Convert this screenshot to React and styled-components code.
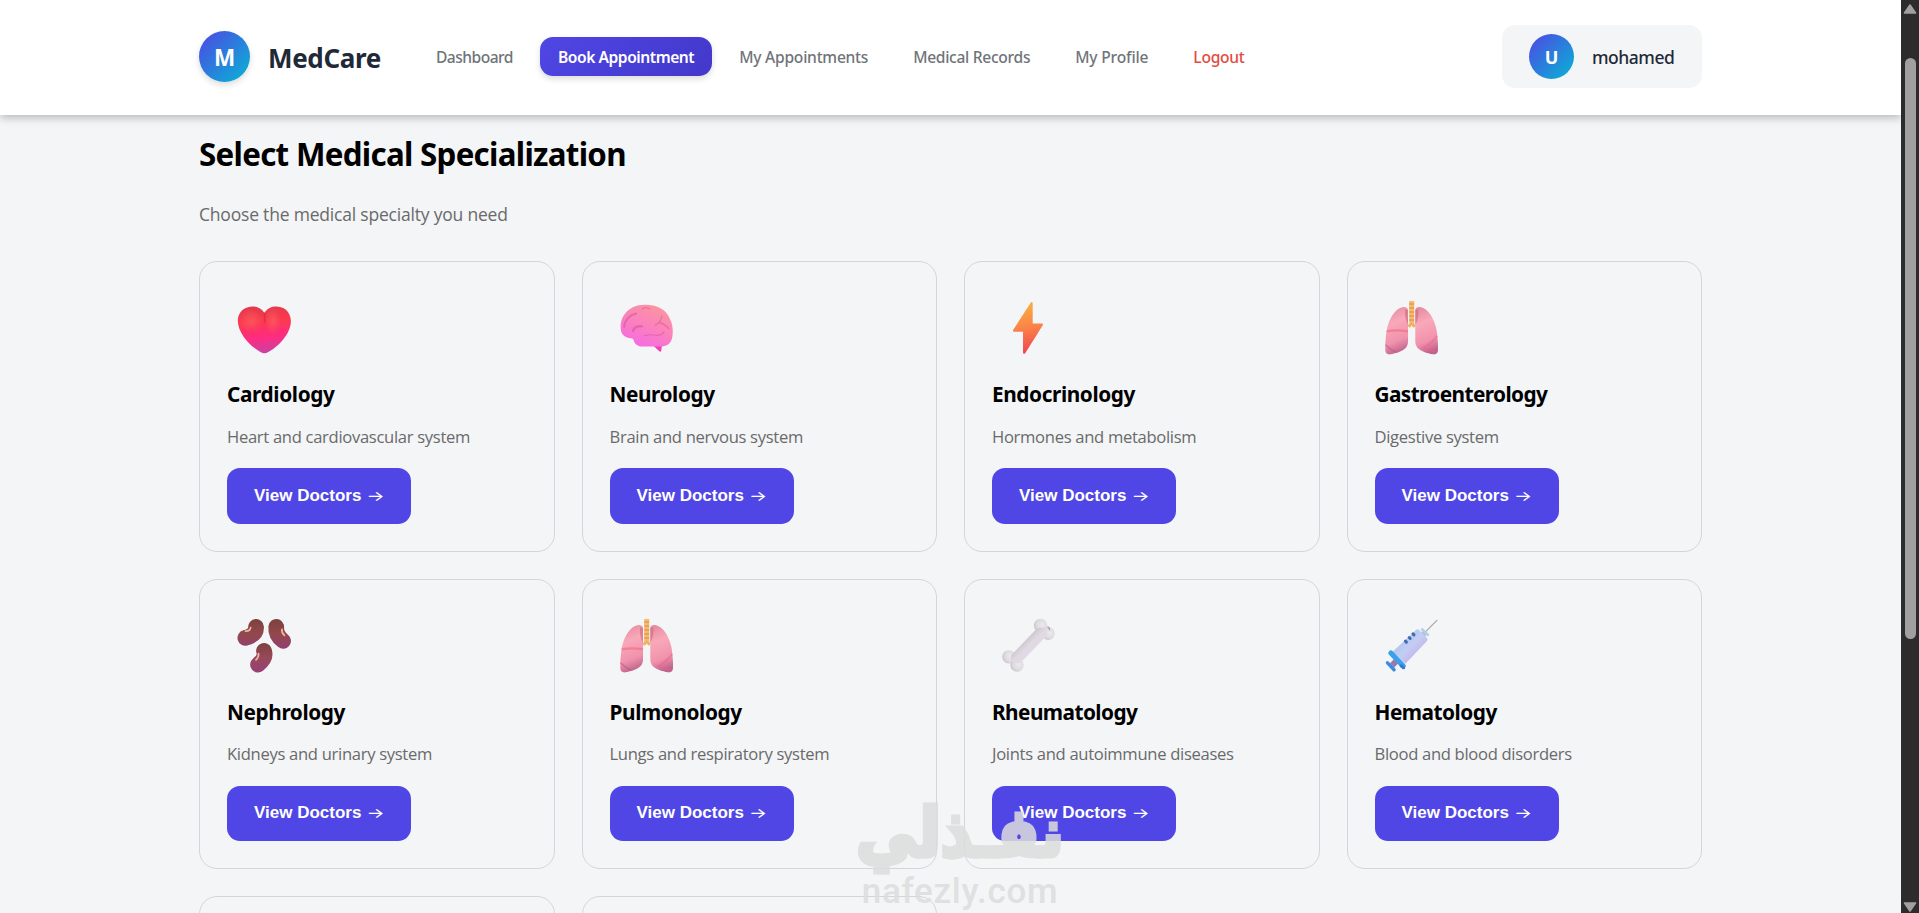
import styled, {createGlobalStyle} from 'styled-components';


function HeartIcon() {
  return (
    <svg width="74" height="76" viewBox="0 0 74 76">
      <defs>
        <linearGradient id="heartFill" x1="0" y1="0" x2="0.1" y2="1">
          <stop offset="0" stopColor="#e0394c" />
          <stop offset="0.35" stopColor="#fb3a4d" />
          <stop offset="0.7" stopColor="#ff2b80" />
          <stop offset="1" stopColor="#cf3fa0" />
        </linearGradient>
        <radialGradient id="heartLight">
          <stop offset="0" stopColor="#ff6464" stopOpacity="0.6" />
          <stop offset="1" stopColor="#ff6464" stopOpacity="0" />
        </radialGradient>
      </defs>
      <path d="M37.4 24C33 17.5 26 16.8 21 18.2C14 20 10.7 26 10.7 32C11 45 24 58 33.5 63.2Q37.4 65.6 41.3 63.2C51 58 64 45 64 32C64 26 60 19.5 54 18.2C48 16.8 41.5 17.5 37.4 24Z" fill="url(#heartFill)" />
      <ellipse cx="24" cy="32" rx="12" ry="12" fill="url(#heartLight)" />
      <ellipse cx="46" cy="32" rx="8" ry="14" fill="url(#heartLight)" />
      <path d="M37.4 24L37.8 33" stroke="#c91f3c" strokeOpacity="0.5" strokeWidth="1.5" strokeLinecap="round" />
    </svg>
  );
}

function BrainIcon() {
  return (
    <svg width="74" height="76" viewBox="0 0 74 76" fill="none">
      <defs>
        <linearGradient id="brainFill" x1="0.75" y1="0.1" x2="0.3" y2="1">
          <stop offset="0" stopColor="#fb93a2" />
          <stop offset="0.5" stopColor="#fb7fc0" />
          <stop offset="1" stopColor="#f56be4" />
        </linearGradient>
      </defs>
      <path d="M43.5 57L49 62.2Q51 64 51.4 61.5L52 56Z" fill="#f43fb8" />
      <path d="M10.6 39C10 26 20 16 34.5 15.8C48 15.6 57 21 60.5 31C63 36 63.6 44 62 50C60 56 56 58 50 57.8H32C27 57.6 24.5 55 23.2 50.2C20 49 17 49.5 14.5 47.5C11.5 45.5 10.7 42.5 10.6 39Z" fill="url(#brainFill)" />
      <g stroke="#d65a92" strokeWidth="1.1" strokeLinecap="round" opacity="0.6">
        <path d="M14 38C15 30 20 26 26 24.5" strokeWidth="2" />
        <path d="M23 42C24 38 28 37 32 37.5" strokeWidth="2.4" />
        <path d="M32 20Q36 17.5 40 20" />
        <path d="M52 27Q51 34 45 36.5M50 34Q55 35 59 40" />
        <path d="M34 47Q41 45 46 46.5Q52 47 54 43" />
      </g>
    </svg>
  );
}

function BoltIcon() {
  return (
    <svg width="74" height="76" viewBox="0 0 74 76">
      <defs>
        <linearGradient id="boltFill" x1="0.4" y1="0" x2="0.5" y2="1">
          <stop offset="0" stopColor="#fbb040" />
          <stop offset="0.5" stopColor="#fb8248" />
          <stop offset="1" stopColor="#ee4350" />
        </linearGradient>
      </defs>
      <path d="M39 13.2Q40.7 12.6 40.7 14.6V34.7H50Q51.6 34.9 50.8 36.3L33.2 64.4Q31.2 66 31 63.7V43H22Q20.4 42.6 21.2 41Z" fill="url(#boltFill)" />
    </svg>
  );
}

function LungsIcon() {
  return (
    <svg width="74" height="76" viewBox="0 0 74 76" fill="none">
      <defs>
        <linearGradient id="lungFill" x1="0.2" y1="0" x2="0.4" y2="1">
          <stop offset="0" stopColor="#e58a9e" />
          <stop offset="0.35" stopColor="#f9a8ba" />
          <stop offset="0.75" stopColor="#f092ac" />
          <stop offset="1" stopColor="#c0648e" />
        </linearGradient>
      </defs>
      <path d="M33 21Q32.5 17.6 28 18C19.5 19.5 13.5 31 11.7 41C10.6 48 10 55 10.2 61.5Q10.4 66 15 65.6C21 64.8 29 62 31.6 58Q33 56 33 53Z" fill="url(#lungFill)" />
      <path d="M40.3 21Q40.8 17.6 45.3 18C53.8 19.5 59.8 31 61.6 41C62.7 48 63.3 55 63.1 61.5Q62.9 66 58.3 65.6C52.3 64.8 44.3 62 41.7 58Q40.3 56 40.3 53Z" fill="url(#lungFill)" />
      <path d="M30 20Q29 29 33 36V21ZM43.3 20Q44.3 29 40.3 36V21Z" fill="#c96a78" opacity="0.6" />
      <path d="M11.6 42.5Q22 40.5 33 42.5" stroke="#f4677f" strokeWidth="2.4" opacity="0.6" />
      <path d="M10.4 56Q14 60 21 63.6" stroke="#b5507f" strokeWidth="1.5" opacity="0.5" />
      <path d="M62.4 47Q56 55 49 59L60 63" stroke="#f4607f" strokeWidth="1.8" opacity="0.5" />
      <path d="M36.7 12V34L33.6 38M36.7 34L39.8 38" stroke="#f3b064" strokeWidth="3.2" />
      <path d="M36.7 12V34" stroke="#f7b96c" strokeWidth="5" />
      <path d="M36.7 14.5V34" stroke="#d98a45" strokeWidth="5" strokeDasharray="1 3" />
    </svg>
  );
}

function BeansIcon() {
  return (
    <svg width="74" height="76" viewBox="0 0 74 76" fill="none">
      <defs>
        <linearGradient id="beanTop" gradientUnits="userSpaceOnUse" x1="0" y1="12" x2="0" y2="42">
          <stop offset="0" stopColor="#7d403f" />
          <stop offset="0.5" stopColor="#93484c" />
          <stop offset="1" stopColor="#924072" />
        </linearGradient>
        <linearGradient id="beanLow" gradientUnits="userSpaceOnUse" x1="0" y1="36" x2="0" y2="66">
          <stop offset="0" stopColor="#7d403f" />
          <stop offset="0.5" stopColor="#98495a" />
          <stop offset="1" stopColor="#984078" />
        </linearGradient>
      </defs>
      <g strokeWidth="15.8" strokeLinecap="round">
        <path d="M29 20Q29.5 28 18.3 31" stroke="url(#beanTop)" />
        <path d="M49.3 20Q48.5 28 56.2 34" stroke="url(#beanTop)" />
        <path d="M37 44Q39.5 51 31 57.8" stroke="url(#beanLow)" />
      </g>
      <g stroke="#efb3a4" strokeWidth="1.8" strokeLinecap="round">
        <path d="M18.5 24.3Q23 24.5 23.6 20.8" />
        <path d="M55 22.5Q54.4 25.8 57.5 28.5" />
        <path d="M31.5 46.8Q31.8 50.5 29 53" />
      </g>
    </svg>
  );
}

function BoneIcon() {
  return (
    <svg width="74" height="76" viewBox="0 0 74 76">
      <defs>
        <linearGradient id="boneShaft" x1="0.3" y1="0.3" x2="0.7" y2="0.7">
          <stop offset="0" stopColor="#c2bbc3" />
          <stop offset="0.5" stopColor="#dfdae1" />
          <stop offset="1" stopColor="#e4d7ea" />
        </linearGradient>
        <radialGradient id="boneKnob" cx="0.62" cy="0.45" r="0.7">
          <stop offset="0" stopColor="#ece9ec" />
          <stop offset="0.6" stopColor="#dedadf" />
          <stop offset="1" stopColor="#c0bac2" />
        </radialGradient>
      </defs>
      <circle cx="48.6" cy="18.6" r="6.7" fill="url(#boneKnob)" />
      <circle cx="56.4" cy="26.6" r="6.5" fill="url(#boneKnob)" />
      <circle cx="16.8" cy="50" r="6.7" fill="url(#boneKnob)" />
      <circle cx="25" cy="58.3" r="6.7" fill="url(#boneKnob)" />
      <path d="M44.5 22Q50 19 54 23Q57 28 52 31.5L29.5 55Q24 58 20 54.5Q17 50 20.5 47Z" fill="url(#boneShaft)" />
      <path d="M55.5 20Q58 20.5 57.5 23.5" stroke="#aaa4ac" strokeWidth="1.2" fill="none" />
    </svg>
  );
}

function SyringeIcon() {
  return (
    <svg width="74" height="76" viewBox="0 0 74 76" fill="none" strokeLinecap="round">
      <defs>
        <linearGradient id="syringeBody" x1="0.2" y1="0.2" x2="0.8" y2="0.8">
          <stop offset="0" stopColor="#a9c4ec" />
          <stop offset="0.5" stopColor="#c4cdf4" />
          <stop offset="1" stopColor="#c0afe6" />
        </linearGradient>
      </defs>
      <path d="M51 24.5L62 13.4" stroke="#a9abb3" strokeWidth="1.3" />
      <path d="M47.5 28.5L50.8 24.5" stroke="#a5c4e0" strokeWidth="5.5" strokeLinecap="butt" />
      <path d="M47.2 22.5L53 28" stroke="#b4cfe4" strokeWidth="2.6" />
      <path d="M41 23Q42.6 21.6 44.2 23.2L52 31Q53.2 32.6 52 34.2L30.4 57L17.5 45Z" fill="url(#syringeBody)" />
      <path d="M39 28L38 27M35.2 31.6L34.2 30.6M31.4 35.2L30.4 34.2" stroke="#3f6bb4" strokeWidth="3" />
      <path d="M22.5 53L17 58.5" stroke="#9a78ac" strokeWidth="6" strokeLinecap="butt" />
      <path d="M15.8 46.2L28.2 59.2" stroke="#3aa0e8" strokeWidth="5.2" />
      <path d="M26 59L28.6 61" stroke="#3579d8" strokeWidth="3" />
      <path d="M12.4 56L19 63" stroke="#3b8be0" strokeWidth="3.4" />
    </svg>
  );
}

const links = [
  {label: 'Dashboard', track: -0.53},
  {label: 'Book Appointment', track: -0.45, active: true},
  {label: 'My Appointments', track: -0.25},
  {label: 'Medical Records', track: -0.3},
  {label: 'My Profile', track: -0.17},
  {label: 'Logout', track: -0.26, danger: true},
];

const specialties = [
  {name: 'Cardiology', text: 'Heart and cardiovascular system', track: -0.37, Icon: HeartIcon},
  {name: 'Neurology', text: 'Brain and nervous system', track: -0.42, Icon: BrainIcon},
  {name: 'Endocrinology', text: 'Hormones and metabolism', track: -0.4, Icon: BoltIcon},
  {name: 'Gastroenterology', text: 'Digestive system', track: -0.6, Icon: LungsIcon},
  {name: 'Nephrology', text: 'Kidneys and urinary system', track: -0.4, Icon: BeansIcon},
  {name: 'Pulmonology', text: 'Lungs and respiratory system', track: -0.4, Icon: LungsIcon},
  {name: 'Rheumatology', text: 'Joints and autoimmune diseases', track: -0.56, Icon: BoneIcon},
  {name: 'Hematology', text: 'Blood and blood disorders', track: -0.5, Icon: SyringeIcon},
];

function App() {
  return (
    <Window>
      <GlobalStyle />
      <Page>
        <Header>
          <Brand>
            <Logo>M</Logo>
            <BrandName>MedCare</BrandName>
          </Brand>
          <Nav>
            {links.map((link) => (
              <NavLink key={link.label} $track={link.track} $active={link.active} $danger={link.danger}>{link.label}</NavLink>
            ))}
          </Nav>
          <User>
            <Avatar>U</Avatar>
            <UserName>mohamed</UserName>
          </User>
        </Header>
        <Main>
          <Title>Select Medical Specialization</Title>
          <Subtitle>Choose the medical specialty you need</Subtitle>
          <Grid>
            {specialties.map(({name, text, track, Icon}) => (
              <Card key={name}>
                <Icon />
                <CardTitle $track={track}>{name}</CardTitle>
                <p>{text}</p>
                <Button>View Doctors <Arrow>→</Arrow></Button>
              </Card>
            ))}
            <Card />
            <Card />
          </Grid>
        </Main>
      </Page>
      <Scrollbar>
        <ScrollArrow viewBox="0 0 14 10"><path d="M7 1L12.5 9H1.5Z" strokeWidth="1.6" strokeLinejoin="round" /></ScrollArrow>
        <Track><Thumb /></Track>
        <ScrollArrow viewBox="0 0 14 10"><path d="M7 9L12.5 1H1.5Z" strokeWidth="1.6" strokeLinejoin="round" /></ScrollArrow>
      </Scrollbar>
      <Watermark>
        <WatermarkArabic>نفـذلي</WatermarkArabic>
        <WatermarkSite>nafezly.com</WatermarkSite>
      </Watermark>
    </Window>
  );
}

const GlobalStyle = createGlobalStyle`
  *{
    box-sizing: border-box;
  }
  body{
    margin: 0;
    overflow: hidden;
    font-family: "Noto Sans", "Open Sans", sans-serif;
  }
  h2, h3, p{
    margin: 0;
  }
`;

const Window = styled.div`
  position: relative;
  display: flex;
  height: 913px;
  overflow: hidden;
`;

const Page = styled.div`
  flex: 1;
  min-width: 0;
  background: #f3f5f7;
`;

const Header = styled.header`
  display: flex;
  align-items: center;
  height: 115px;
  padding: 0 199px 2px;
  background: white;
  box-shadow: 0 3px 8px rgba(0, 0, 0, 0.24);
`;

const Brand = styled.div`
  display: flex;
  align-items: center;
  gap: 18px;
  width: 219px;
`;

const Circle = styled.div`
  display: flex;
  align-items: center;
  justify-content: center;
  flex-shrink: 0;
  border-radius: 50%;
  background: linear-gradient(135deg, #4f46e5, #06b6d4);
  color: white;
  font-weight: 700;
`;

const Logo = styled(Circle)`
  width: 51px;
  height: 51px;
  padding-top: 1px;
  font-size: 22.5px;
  box-shadow: 0 3px 6px rgba(0, 0, 0, 0.14);
`;

const Avatar = styled(Circle)`
  width: 45px;
  height: 45px;
  padding-top: 1px;
  font-size: 18px;
`;

const BrandName = styled.span`
  margin-top: 3px;
  color: #1f2937;
  font-size: 26px;
  font-weight: 700;
  letter-spacing: -0.36px;
`;

const Nav = styled.nav`
  display: flex;
  gap: 9px;
`;

const NavLink = styled.a`
  height: 39px;
  padding: 0 18px;
  border-radius: 13px;
  font-size: 15.6px;
  font-weight: ${(props) => (props.$active ? 600 : 500)};
  line-height: 40px;
  letter-spacing: ${(props) => props.$track}px;
  white-space: nowrap;
  color: ${(props) => (props.$active ? 'white' : props.$danger ? '#e24c3f' : '#6f7479')};
  background: ${(props) => (props.$active ? 'linear-gradient(135deg, #4f46e5, #4338ca)' : 'none')};
  box-shadow: ${(props) => (props.$active ? '0 3px 6px rgba(0, 0, 0, 0.14)' : 'none')};
`;

const User = styled.div`
  display: flex;
  align-items: center;
  gap: 18px;
  width: 200px;
  height: 63px;
  margin-left: auto;
  padding: 0 27px;
  border-radius: 13px;
  background: #f3f5f7;
`;

const UserName = styled.span`
  margin-top: 1px;
  color: #1f2937;
  font-size: 17.5px;
  font-weight: 500;
  letter-spacing: -0.48px;
`;

const Main = styled.main`
  padding: 18px 199px 0;
`;

const Title = styled.h2`
  color: black;
  font-size: 31.3px;
  line-height: 42px;
  letter-spacing: -0.7px;
`;

const Subtitle = styled.p`
  margin: 25.6px 0 34.8px;
  color: #6a6a6a;
  font-family: "Open Sans", sans-serif;
  font-size: 17.5px;
  line-height: 26px;
  letter-spacing: -0.2px;
`;

const Grid = styled.div`
  display: grid;
  grid-template-columns: repeat(4, 1fr);
  grid-auto-rows: 290.5px;
  gap: 27px;
`;

const Card = styled.div`
  display: flex;
  flex-direction: column;
  align-items: flex-start;
  padding: 27px;
  border: 1px solid #d3d5d8;
  border-radius: 18px;
  p{
    margin-top: 16.6px;
    color: #6a6a6a;
    font-family: "Open Sans", sans-serif;
    font-size: 16.6px;
    line-height: 24px;
    letter-spacing: -0.31px;
  }
`;

const CardTitle = styled.h3`
  margin-top: 15px;
  color: black;
  font-size: 20.8px;
  line-height: 28px;
  letter-spacing: ${(props) => props.$track}px;
`;

const Button = styled.button`
  display: flex;
  align-items: center;
  gap: 5px;
  width: 184px;
  height: 56px;
  margin-top: 19.4px;
  padding: 0 27px;
  border: none;
  border-radius: 13px;
  background: #4f46e5;
  color: white;
  font-family: "Liberation Sans", Arial, sans-serif;
  font-size: 17px;
  font-weight: 700;
  white-space: nowrap;
`;

const Arrow = styled.span`
  font-family: Inter, sans-serif;
  font-size: 19px;
  font-weight: 400;
  line-height: 20px;
  transform: scaleY(0.75);
`;

const Scrollbar = styled.div`
  display: flex;
  flex-direction: column;
  align-items: center;
  width: 18px;
  padding: 4px 0 1px;
  background: #2c2c2c;
`;

const ScrollArrow = styled.svg`
  width: 14px;
  height: 10px;
  fill: #a0a0a0;
  stroke: #a0a0a0;
`;

const Track = styled.div`
  flex: 1;
  padding-top: 44px;
`;

const Thumb = styled.div`
  width: 11px;
  height: 581px;
  border-radius: 6px;
  background: #a0a0a0;
`;

const Watermark = styled.div`
  position: absolute;
  top: 795px;
  left: 853px;
  width: 214px;
  display: flex;
  flex-direction: column;
  align-items: center;
  color: #dcdddd;
  opacity: 0.85;
  pointer-events: none;
`;

const WatermarkArabic = styled.span`
  font-family: "DejaVu Sans", sans-serif;
  font-size: 61px;
  font-weight: 700;
  line-height: 76px;
  white-space: nowrap;
  -webkit-text-stroke: 4.5px #dcdddd;
  transform: scaleY(1.1);
`;

const WatermarkSite = styled.span`
  font-family: Roboto, sans-serif;
  font-size: 35px;
  font-weight: 500;
  line-height: 42px;
  letter-spacing: 0.7px;
`;

export default App;
